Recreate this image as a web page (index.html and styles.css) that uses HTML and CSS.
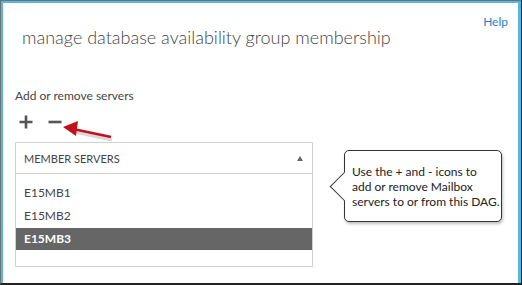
FILE: index.html
```html
<!DOCTYPE html>
<html>
<head>
<meta charset="utf-8">
<link rel="stylesheet" href="styles.css">
</head>
<body>
<div class="frame">
  <div class="panel">
    <div class="header">
      <h1 class="title">manage database availability group membership</h1>
      <a class="help">Help</a>
    </div>
    <div class="section-label">Add or remove servers</div>
    <div class="toolbar">
      <svg class="tool" width="16" height="16" viewBox="0 0 16 16"><path d="M8 1.5v13M1.5 8h13" stroke="#555" stroke-width="2.6" fill="none"/></svg>
      <svg class="tool" width="16" height="16" viewBox="0 0 16 16"><path d="M1.5 8h13" stroke="#555" stroke-width="2.6" fill="none"/></svg>
    </div>
    <div class="listbox">
      <div class="list-header">
        <span>MEMBER SERVERS</span>
        <span class="sort"></span>
      </div>
      <div class="rows">
        <div class="row">E15MB1</div>
        <div class="row">E15MB2</div>
        <div class="row selected">E15MB3</div>
      </div>
    </div>
  </div>
  <svg class="arrow" width="60" height="24" viewBox="0 0 60 24">
    <path d="M52 18 L14 10" stroke="rgba(0,0,0,0.15)" stroke-width="3" fill="none" transform="translate(1,2)"/>
    <path d="M52 17 L14 9" stroke="#c1121b" stroke-width="2.8" fill="none"/>
    <path d="M4 7 L19 1 L17 16 Z" fill="#c1121b"/>
  </svg>
  <div class="callout">
    <div class="callout-text">Use the + and - icons to<br>add or remove Mailbox<br>servers to or from this DAG.</div>
  </div>
</div>
</body>
</html>
```
FILE: styles.css
```css
* { box-sizing: border-box; }
html, body { margin: 0; padding: 0; background: #fff; }
body { font-family: "Lato", "Liberation Sans", sans-serif; color: #444; }

.frame {
  position: relative;
  width: 522px;
  height: 285px;
  border: 1px solid #707070;
  border-right-color: #222;
  border-bottom: 2px solid #222;
}
.panel {
  height: 100%;
  border: 2px solid #55b8e2;
  border-bottom: none;
  border-right-width: 3px;
  padding: 0 12px;
}
.header {
  display: flex;
  justify-content: space-between;
  align-items: flex-start;
  padding: 12px 0 0 7px;
}
.title {
  margin: 10px 0 0 0;
  font-size: 18px;
  line-height: 24px;
  font-weight: 300;
  color: #444;
}
.help {
  font-size: 12px;
  line-height: 14px;
  color: #1f7fcf;
  margin-right: -2px;
}
.section-label {
  margin-top: 39px;
  font-size: 12px;
  line-height: 16px;
  color: #444;
}
.toolbar {
  display: flex;
  gap: 13px;
  margin-top: 10px;
  padding-left: 3px;
}
.tool { display: block; }
.listbox {
  margin-top: 12px;
  width: 298px;
  border: 1px solid #d2d2d2;
  padding-bottom: 16px;
}
.list-header {
  display: flex;
  justify-content: space-between;
  align-items: center;
  height: 31px;
  padding: 0 8px 0 8px;
  border-bottom: 1px solid #d2d2d2;
  font-size: 11px;
  color: #444;
}
.sort {
  width: 0; height: 0;
  border-left: 3px solid transparent;
  border-right: 3px solid transparent;
  border-bottom: 5px solid #666;
  margin-right: 1px;
}
.rows { padding-top: 8px; }
.row {
  height: 22px;
  line-height: 22px;
  padding-left: 8px;
  font-size: 12px;
  color: #444;
}
.row + .row { margin-top: 1px; }
.row.selected {
  background: #666;
  color: #fff;
  font-weight: 700;
}

.arrow {
  position: absolute;
  left: 58px;
  top: 119px;
}

.callout {
  position: absolute;
  left: 343px;
  top: 149px;
  width: 158px;
  height: 72px;
  border: 1px solid #333;
  border-radius: 5px;
  background: #fff;
  box-shadow: 1px 2px 3px rgba(0,0,0,0.25);
  display: flex;
  align-items: center;
  padding-left: 7px;
}
.callout::before {
  content: "";
  position: absolute;
  left: -11px;
  top: 25px;
  width: 20px;
  height: 20px;
  background: #fff;
  border-left: 1px solid #333;
  border-bottom: 1px solid #333;
  transform: rotate(45deg);
}
.callout-text {
  position: relative;
  font-size: 12px;
  line-height: 15px;
  color: #222;
}
```
